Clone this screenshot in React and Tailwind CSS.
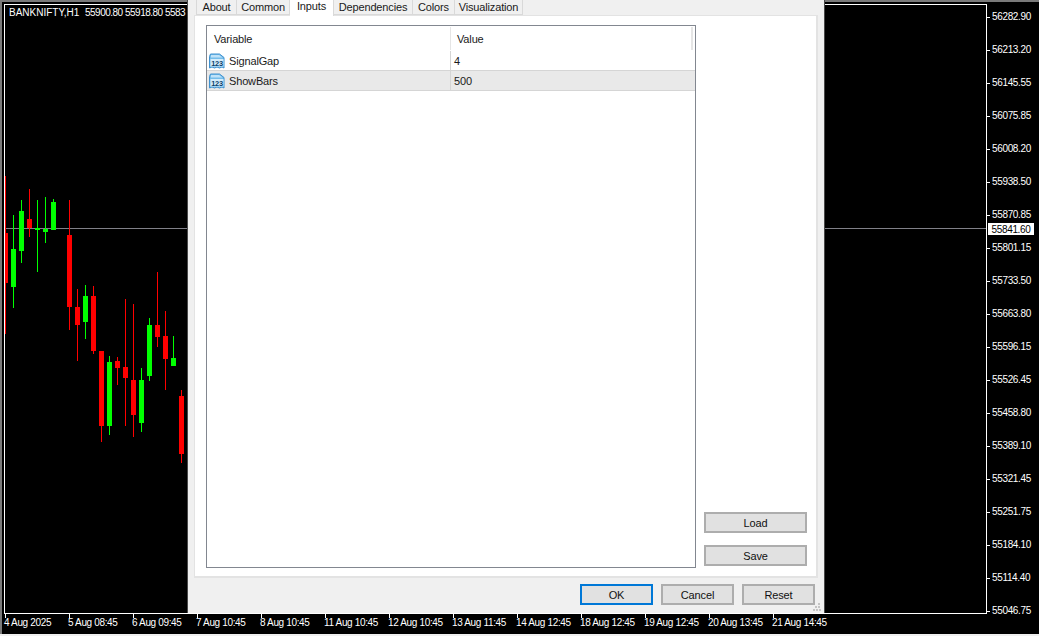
const candles = [
  [5, 'r', 176, 334, 233, 283],
  [13, 'g', 215, 308, 249, 287],
  [21, 'g', 200, 263, 211, 251],
  [29, 'r', 189, 237, 219, 228],
  [37, 'g', 200, 272, 228, 230],
  [45, 'g', 197, 243, 229, 232],
  [53, 'g', 199, 230, 202, 230],
  [69, 'r', 200, 330, 235, 307],
  [77, 'r', 289, 361, 307, 325],
  [85, 'g', 285, 339, 296, 322],
  [93, 'r', 286, 354, 296, 351],
  [101, 'r', 351, 442, 351, 426],
  [109, 'g', 356, 435, 362, 426],
  [117, 'r', 357, 385, 361, 368],
  [125, 'r', 299, 426, 367, 378],
  [133, 'r', 304, 437, 380, 415],
  [141, 'g', 368, 432, 380, 423],
  [149, 'g', 318, 381, 325, 376],
  [157, 'r', 272, 347, 325, 337],
  [165, 'r', 311, 390, 336, 359],
  [173, 'g', 336, 366, 358, 366],
  [181, 'r', 390, 463, 396, 454],
];

const prices = ['56282.90','56213.20','56145.55','56075.85','56008.20','55938.50','55870.85','55801.15','55733.50','55663.80','55596.15','55526.45','55458.80','55389.10','55321.45','55251.75','55184.10','55114.40','55046.75'];
const times = ['4 Aug 2025','5 Aug 08:45','6 Aug 09:45','7 Aug 10:45','8 Aug 10:45','11 Aug 10:45','12 Aug 10:45','13 Aug 11:45','14 Aug 12:45','18 Aug 12:45','19 Aug 12:45','20 Aug 13:45','21 Aug 14:45'];
const tabs = [['About','w-[41px]'],['Common','w-[53px]'],['Inputs','w-[44px]'],['Dependencies','w-[79px]'],['Colors','w-[42px]'],['Visualization','w-[68px]']];

function Chart() {
  return (
    <svg className="block" width="981" height="608" viewBox="5 5 981 608" shapeRendering="crispEdges">
      <rect x="5" y="228" width="981" height="1" fill="#808088" />
      {candles.map(([x, c, wt, wb, bt, bb]) => {
        const col = c === 'r' ? '#ff0000' : '#00ff00';
        const left = x === 5 ? 5 : x - 2;
        const w = x === 5 ? 3 : 5;
        return (
          <g key={x} fill={col}>
            <rect x={x} y={wt} width="1" height={wb - wt} />
            <rect x={left} y={bt} width={w} height={bb - bt} />
          </g>
        );
      })}
      <rect x="187" y="449" width="1" height="24" fill="#5a0000" />
    </svg>
  );
}

function Icon() {
  return (
    <svg width="17" height="16" viewBox="0 0 17 16" className="shrink-0">
      <path d="M0.5 3.5 L1.5 1 H10.5 L15 4.5 V15 L13 14 L10.5 15 L8 14 L5.5 15 L3 14 L0.5 15 Z" fill="#74bdea" stroke="#3f91cf" strokeWidth="1" />
      <path d="M2 2 H10 L13.5 4.5 H2 Z" fill="#bfe2f8" />
      <rect x="1.5" y="6" width="13" height="7.5" fill="#d4ecfb" />
      <text x="8" y="12.6" textAnchor="middle" fontSize="7.4" fontWeight="700" fill="#0b3f6c" fontFamily="'Liberation Sans', sans-serif" letterSpacing="-0.2">123</text>
    </svg>
  );
}

function Row({ name, value, active }) {
  return (
    <div className={`flex h-[20px] border-b border-[#d5d5d5] ${active ? 'bg-[#e9e9e9]' : 'bg-white'}`}>
      <div className="flex w-[243px] items-center gap-[3px] pl-[2px]">
        <Icon />
        <span>{name}</span>
      </div>
      <div className="flex flex-1 items-center border-l border-[#d5d5d5] pl-[3px]">{value}</div>
    </div>
  );
}

function Btn({ children, className = 'border-[#adadad]' }) {
  return (
    <button className={`flex h-[21px] items-center justify-center border-2 bg-[#e1e1e1] text-[#111] ${className}`}>
      {children}
    </button>
  );
}

function Dialog() {
  return (
    <div className="absolute left-[187px] top-0 flex h-[613px] w-[638px] flex-col border-x border-[#4a4a4a] bg-[#f0f0f0] pl-[6px] pr-[6px] text-[11px] leading-[14px] tracking-[-0.15px] text-[#1a1a1a] font-['Liberation_Sans',sans-serif]">
      <div className="flex h-[15px] pl-[2px]">
        {tabs.map(([t, w]) => (
          <div
            key={t}
            className={`flex items-center justify-center border-r border-[#d9d9d9] ${w} ${t === 'Inputs' ? 'relative z-10 -mb-px h-[16px] bg-white pb-[5px]' : 'h-[15px] border-b border-[#d9d9d9]'} ${t === 'About' ? 'border-l' : ''}`}
          >
            {t}
          </div>
        ))}
      </div>
      <div className="flex h-[563px] w-[624px] gap-[8px] border-2 border-l border-t border-[#e3e3e3] bg-white pl-[11px] pt-[9px]">
        <div className="flex h-[543px] w-[490px] flex-col border border-[#828790] bg-white">
          <div className="flex h-[25px]">
            <div className="flex w-[243px] items-center pl-[7px]">Variable</div>
            <div className="my-[1px] flex w-[243px] items-center border-l border-r-2 border-[#e5e5e5] pl-[6px]">Value</div>
          </div>
          <Row name="SignalGap" value="4" />
          <Row name="ShowBars" value="500" active />
        </div>
        <div className="flex flex-col gap-[12px] pt-[487px]">
          <Btn className="w-[103px] border-[#adadad]">Load</Btn>
          <Btn className="w-[103px] border-[#adadad]">Save</Btn>
        </div>
      </div>
      <div className="relative flex flex-1 justify-end gap-[8px] pr-[3px] pt-[6px]">
        <Btn className="w-[73px] border-[#0078d7]">OK</Btn>
        <Btn className="w-[73px] border-[#adadad]">Cancel</Btn>
        <Btn className="w-[73px] border-[#adadad]">Reset</Btn>
        <svg className="absolute bottom-[2px] right-[-3px]" width="8" height="8" viewBox="0 0 8 8" shapeRendering="crispEdges" fill="#c4c4c4">
          <rect x="5" y="0" width="2" height="2" />
          <rect x="2" y="3" width="2" height="2" />
          <rect x="5" y="3" width="2" height="2" />
          <rect x="0" y="6" width="2" height="2" />
          <rect x="3" y="6" width="2" height="2" />
          <rect x="6" y="6" width="2" height="2" />
        </svg>
      </div>
    </div>
  );
}

export default function App() {
  return (
    <div className="relative h-[636px] w-[1039px] overflow-hidden bg-[#f0f0f0] pb-[2px] font-['Liberation_Sans',sans-serif]">
      <div className="flex h-full flex-col border-l-2 border-t-2 border-[#7a7a7a] bg-black text-[10px] tracking-[-0.35px] text-white">
        <div className="flex h-[612px] pl-[2px] pt-[2px]">
          <div className="relative h-[610px] w-[983px] border border-white">
            <Chart />
            <div className="absolute left-[4px] top-[1px] whitespace-pre text-[10px] leading-[14px] tracking-[0px]">
              BANKNIFTY,H1  <span className="tracking-[-0.5px]">55900.80 55918.80 5583</span>
            </div>
          </div>
          <div className="relative flex-1 pt-[6px]">
            {prices.map((p) => (
              <div key={p} className="flex h-[33px] items-start leading-[14px]">
                <span className="mr-[2px] mt-[7px] h-px w-[3px] bg-white" />
                <span>{p}</span>
              </div>
            ))}
            <div className="absolute left-px top-[219px] flex h-[12px] w-[46px] items-center justify-center bg-white text-black">55841.60</div>
          </div>
        </div>
        <div className="flex flex-1 pl-[3px]">
          {times.map((t) => (
            <div key={t} className="relative w-[64px] shrink-0 leading-[14px]">
              <span className="absolute left-0 top-0 h-[4px] w-px bg-white" />
              <span className="absolute left-[-1px] top-[2px] whitespace-nowrap">{t}</span>
            </div>
          ))}
        </div>
      </div>
      <Dialog />
    </div>
  );
}
